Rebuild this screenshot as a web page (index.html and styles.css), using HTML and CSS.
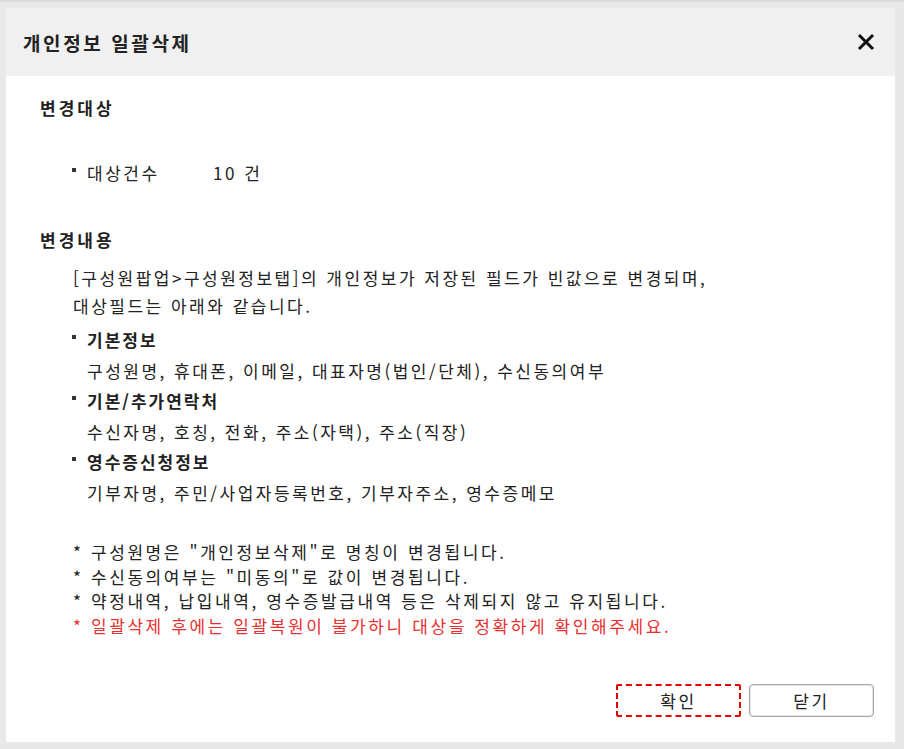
FILE: index.html
```html
<!DOCTYPE html>
<html lang="ko">
<head>
    <meta charset="UTF-8">
    <meta name="viewport" content="width=device-width, initial-scale=1.0">
    <title>개인정보 일괄삭제</title>
    <link rel="stylesheet" href="styles.css">
</head>
<body>
    <div class="dialog">
        <div class="dialog-header">
            <h1 class="dialog-title">개인정보 일괄삭제</h1>
            <button class="close-btn" aria-label="닫기">
                <svg width="18" height="18" viewBox="0 0 18 18">
                    <path d="M2 2 L16 16 M16 2 L2 16" stroke="#111" stroke-width="3" fill="none"/>
                </svg>
            </button>
        </div>
        <div class="dialog-body">
            <h2 class="section-title first">변경대상</h2>
            <div class="count-row">
                <span class="bullet"></span>
                <span class="count-label">대상건수</span>
                <span class="count-value">10 건</span>
            </div>

            <h2 class="section-title second">변경내용</h2>
            <p class="desc">[구성원팝업&gt;구성원정보탭]의 개인정보가 저장된 필드가 빈값으로 변경되며,<br>대상필드는 아래와 같습니다.</p>

            <ul class="fields">
                <li>
                    <div class="field-name"><span class="bullet"></span>기본정보</div>
                    <div class="field-list">구성원명, 휴대폰, 이메일, 대표자명(법인/단체), 수신동의여부</div>
                </li>
                <li>
                    <div class="field-name"><span class="bullet"></span>기본/추가연락처</div>
                    <div class="field-list">수신자명, 호칭, 전화, 주소(자택), 주소(직장)</div>
                </li>
                <li>
                    <div class="field-name"><span class="bullet"></span>영수증신청정보</div>
                    <div class="field-list">기부자명, 주민/사업자등록번호, 기부자주소, 영수증메모</div>
                </li>
            </ul>

            <ul class="notes">
                <li>* 구성원명은 "개인정보삭제"로 명칭이 변경됩니다.</li>
                <li>* 수신동의여부는 "미동의"로 값이 변경됩니다.</li>
                <li>* 약정내역, 납입내역, 영수증발급내역 등은 삭제되지 않고 유지됩니다.</li>
                <li class="warn">* 일괄삭제 후에는 일괄복원이 불가하니 대상을 정확하게 확인해주세요.</li>
            </ul>

            <div class="dialog-footer">
                <button class="btn btn-focus">확인</button>
                <button class="btn">닫기</button>
            </div>
        </div>
    </div>
</body>
</html>
```

FILE: styles.css
```css
body {
    margin: 0;
    padding: 6px 9px 7px 6px;
    background-color: #e8e8e8;
    border-top: 2px solid #dcdcdc;
    box-sizing: border-box;
    height: 749px;
    font-family: "Noto Sans CJK KR", "Noto Sans", sans-serif;
    color: #222;
}
.dialog {
    height: 100%;
    display: flex;
    flex-direction: column;
    background: #fff;
}
.dialog-header {
    height: 68px;
    flex-shrink: 0;
    background: #f0f0f0;
    display: flex;
    align-items: center;
    justify-content: space-between;
    padding: 0 20px 0 17px;
}
.dialog-title {
    margin: 0;
    font-size: 19px;
    font-weight: bold;
    letter-spacing: 2.6px;
    color: #222;
}
.close-btn {
    border: none;
    background: none;
    padding: 0;
    width: 18px;
    height: 18px;
    cursor: pointer;
}
.dialog-body {
    flex: 1;
    display: flex;
    flex-direction: column;
    padding: 0 21px 25px 34px;
}
.section-title {
    margin: 0;
    font-size: 17px;
    font-weight: bold;
    line-height: 20px;
    letter-spacing: 3px;
}
.section-title.first {
    margin-top: 22px;
}
.section-title.second {
    margin-top: 44px;
}
.bullet {
    display: inline-block;
    width: 4px;
    height: 4px;
    background: #333;
    margin-right: 11px;
    vertical-align: 8px;
}
.count-row {
    display: flex;
    align-items: baseline;
    margin-top: 41px;
    padding-left: 32px;
    font-size: 17px;
    line-height: 27px;
    letter-spacing: 2.5px;
}
.count-row .bullet {
    align-self: flex-start;
    margin-top: 9px;
}
.count-label {
    width: 126px;
}
.desc {
    margin: 14px 0 0 33px;
    font-size: 17px;
    line-height: 28px;
    letter-spacing: 2.5px;
}
.fields {
    list-style: none;
    margin: 5px 0 0 0;
    padding: 0 0 0 32px;
    font-size: 17px;
    line-height: 30.5px;
    letter-spacing: 2.5px;
}
.field-name {
    font-weight: bold;
    letter-spacing: 2px;
}
.field-list {
    padding-left: 15px;
}
.notes {
    list-style: none;
    margin: 32px 0 0 0;
    padding: 0 0 0 33px;
    font-size: 17px;
    line-height: 24.5px;
    letter-spacing: 2.6px;
}
.notes .warn {
    color: #e8312f;
}
.dialog-footer {
    margin-top: auto;
    display: flex;
    justify-content: flex-end;
    gap: 8px;
}
.btn {
    width: 125px;
    height: 33px;
    background: #fff;
    border: 1px solid #a8a8a8;
    border-radius: 4px;
    box-shadow: inset 0 0 0 1px #e4e4e4;
    font-family: inherit;
    font-size: 17px;
    letter-spacing: 2.5px;
    color: #222;
    cursor: pointer;
}
.btn-focus {
    border: 2px dashed #e60000;
    border-radius: 2px;
    box-shadow: none;
}
```
